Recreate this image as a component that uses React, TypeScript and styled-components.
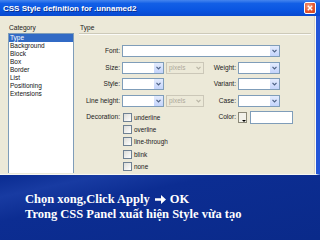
import * as React from 'react';
import styled, { createGlobalStyle } from 'styled-components';

const GlobalStyle = createGlobalStyle`
  html, body {
    margin: 0;
    padding: 0;
  }
  body {
    width: 320px;
    height: 240px;
    overflow: hidden;
    background: #0b2b8c;
  }
`;

const Slide = styled.div`
  width: 320px;
  height: 240px;
  display: flex;
  flex-direction: column;
  overflow: hidden;
  background: linear-gradient(168deg, #0a2a8c 0%, #0c2e94 58%, #183ba2 64%, #0c2d92 72%, #0a2a8a 100%);
  font-family: "Liberation Sans", Arial, sans-serif;
`;

const Window = styled.div`
  height: 175px;
  flex-shrink: 0;
  display: flex;
  flex-direction: column;
`;

const TitleBar = styled.div`
  height: 16px;
  display: flex;
  align-items: center;
  justify-content: space-between;
  padding: 0 4px 0 3px;
  background: linear-gradient(#4585ef, #125fe6 22%, #0a56e2 60%, #0849cf);
  color: #fff;
  font-weight: bold;
  font-size: 8px;
  text-shadow: 1px 1px 0 #0b2f8f;
`;

const CloseButton = styled.div`
  width: 10px;
  height: 10px;
  border: 1px solid #fff;
  border-radius: 2px;
  background: radial-gradient(circle at 35% 30%, #f39a7d, #e2542c 60%, #c8401f);
  display: flex;
  align-items: center;
  justify-content: center;
`;

const Body = styled.div`
  flex: 1;
  display: flex;
  background: #ece9d8;
  border-right: 4px solid #2356d8;
  border-bottom: 1px solid #f7f7f2;
  box-shadow: inset -1px 0 0 #fbfbf7, inset -2px 0 0 #d8d4c4;
  padding-left: 8px;
`;

const LeftColumn = styled.div`
  width: 66px;
  display: flex;
  flex-direction: column;
  padding-top: 7px;
  padding-bottom: 1px;
`;

const GroupLabel = styled.div`
  height: 10px;
  line-height: 9px;
  font-size: 6.6px;
  color: #1a1a1a;
  padding-left: 1px;
`;

const ListBox = styled.div`
  flex: 1;
  background: #fff;
  border: 1px solid #7f9db9;
  border-bottom: none;
  display: flex;
  flex-direction: column;
`;

const ListItem = styled.div<{ $selected?: boolean }>`
  height: 8px;
  line-height: 8px;
  font-size: 6.5px;
  padding-left: 1px;
  color: ${p => (p.$selected ? '#fff' : '#111')};
  background: ${p => (p.$selected ? '#316ac5' : 'transparent')};
`;

const RightPanel = styled.div`
  flex: 1;
  display: flex;
  flex-direction: column;
  margin-left: 5px;
  margin-right: 5px;
  padding-top: 7px;
`;

const Separator = styled.div`
  height: 0;
  border-top: 1px solid #cdcab9;
  border-bottom: 1px solid #fbfbf8;
  margin-bottom: 10px;
`;

const Form = styled.div`
  display: flex;
  flex-direction: column;
  gap: 4.5px;
`;

const Row = styled.div`
  display: flex;
  align-items: center;
  height: 12px;
`;

const TopRow = styled.div`
  display: flex;
  align-items: flex-start;
`;

const Label = styled.div<{ $w: number }>`
  width: ${p => p.$w}px;
  flex-shrink: 0;
  text-align: right;
  font-size: 6.6px;
  line-height: 12px;
  color: #1a1a1a;
  margin-right: 2px;
`;

const Combo = styled.div<{ $w: number; $disabled?: boolean }>`
  width: ${p => p.$w}px;
  height: 12px;
  box-sizing: border-box;
  flex-shrink: 0;
  display: flex;
  align-items: center;
  justify-content: space-between;
  border: 1px solid ${p => (p.$disabled ? '#cbc7b8' : '#7f9db9')};
  background: ${p => (p.$disabled ? '#ece9d8' : '#fff')};
  font-size: 6.4px;
  color: #aca899;
  padding-left: 2px;
  margin-right: ${p => (p.$disabled ? 0 : 2)}px;
`;

const DropButton = styled.div<{ $disabled?: boolean }>`
  width: 9px;
  height: 10px;
  display: flex;
  align-items: center;
  justify-content: center;
  background: ${p => (p.$disabled ? 'transparent' : 'linear-gradient(#e3ebfd, #c4d4fb)')};
`;

const TextInput = styled.div<{ $w: number }>`
  width: ${p => p.$w}px;
  height: 13px;
  box-sizing: border-box;
  border: 1px solid #7f9db9;
  background: #fff;
`;

const CheckList = styled.div`
  width: 82px;
  flex-shrink: 0;
  display: flex;
  flex-direction: column;
`;

const CheckRow = styled.div`
  height: 12.3px;
  display: flex;
  align-items: center;
  gap: 2px;
  font-size: 6.4px;
  color: #1a1a1a;
`;

const CheckBox = styled.div`
  width: 7px;
  height: 7px;
  border: 1px solid #6f8193;
  background: linear-gradient(135deg, #dcdcd7, #fff);
  margin-left: 1px;
`;

const Swatch = styled.div`
  width: 9px;
  height: 11px;
  margin-top: 1px;
  box-sizing: border-box;
  border: 1px solid #8a8878;
  background: #f2f1ea;
  margin-right: 3px;
  position: relative;
  &:after {
    content: "";
    position: absolute;
    right: 0;
    bottom: 0;
    border-left: 2px solid transparent;
    border-right: 2px solid transparent;
    border-top: 2px solid #000;
  }
`;

const Caption = styled.div`
  flex: 1;
  padding: 17px 0 0 25px;
  color: #fff;
  font-family: "Liberation Serif", "Times New Roman", serif;
  font-weight: bold;
  font-size: 12.5px;
  line-height: 15px;
`;

const Line = styled.div`
  display: flex;
  align-items: center;
  white-space: pre;
`;

const Arrow = () => (
  <svg width="11" height="9" viewBox="0 0 11 9" style={{ margin: '0 4px 0 5px' }}>
    <path d="M0 3.2h6V0l5 4.5-5 4.5V5.8H0z" fill="#fff" />
  </svg>
);

const Chevron = ({ disabled }: { disabled?: boolean }) => (
  <svg width="5" height="4" viewBox="0 0 5 4">
    <path d="M0.5 0.8L2.5 2.8L4.5 0.8" stroke={disabled ? '#bab6a6' : '#4d6185'} strokeWidth="1.2" fill="none" />
  </svg>
);

const Select = ({ w, text, disabled }: { w: number; text?: string; disabled?: boolean }) => (
  <Combo $w={w} $disabled={disabled}>
    <span>{text}</span>
    <DropButton $disabled={disabled}>
      <Chevron disabled={disabled} />
    </DropButton>
  </Combo>
);

const categories = ['Type', 'Background', 'Block', 'Box', 'Border', 'List', 'Positioning', 'Extensions'];
const decorations = ['underline', 'overline', 'line-through', 'blink', 'none'];

export default function App() {
  return (
    <Slide>
      <GlobalStyle />
      <Window>
        <TitleBar>
          <span>CSS Style definition for .unnamed2</span>
          <CloseButton>
            <svg width="6" height="6" viewBox="0 0 6 6">
              <path d="M0.8 0.8L5.2 5.2M5.2 0.8L0.8 5.2" stroke="#fff" strokeWidth="1.4" />
            </svg>
          </CloseButton>
        </TitleBar>
        <Body>
          <LeftColumn>
            <GroupLabel>Category</GroupLabel>
            <ListBox>
              {categories.map((c, i) => (
                <ListItem key={c} $selected={i === 0}>{c}</ListItem>
              ))}
            </ListBox>
          </LeftColumn>
          <RightPanel>
            <GroupLabel>Type</GroupLabel>
            <Separator />
            <Form>
              <Row>
                <Label $w={41}>Font:</Label>
                <Select w={158} />
              </Row>
              <Row>
                <Label $w={41}>Size:</Label>
                <Select w={42} />
                <Select w={38} text="pixels" disabled />
                <Label $w={32}>Weight:</Label>
                <Select w={42} />
              </Row>
              <Row>
                <Label $w={41}>Style:</Label>
                <Select w={42} />
                <Label $w={70}>Variant:</Label>
                <Select w={42} />
              </Row>
              <Row>
                <Label $w={41}>Line height:</Label>
                <Select w={42} />
                <Select w={38} text="pixels" disabled />
                <Label $w={32}>Case:</Label>
                <Select w={42} />
              </Row>
              <TopRow>
                <Label $w={41}>Decoration:</Label>
                <CheckList>
                  {decorations.map(d => (
                    <CheckRow key={d}>
                      <CheckBox />
                      <span>{d}</span>
                    </CheckRow>
                  ))}
                </CheckList>
                <Label $w={32}>Color:</Label>
                <Swatch />
                <TextInput $w={43} />
              </TopRow>
            </Form>
          </RightPanel>
        </Body>
      </Window>
      <Caption>
        <Line>Chọn xong,Click Apply<Arrow />OK</Line>
        <Line>Trong CSS Panel xuất hiện Style vừa tạo</Line>
      </Caption>
    </Slide>
  );
}
